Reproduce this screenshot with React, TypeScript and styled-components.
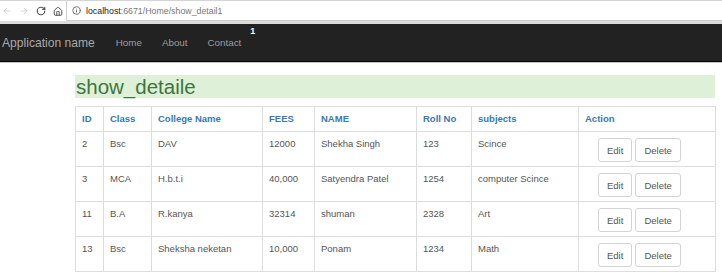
import React from "react";
import styled, { createGlobalStyle } from "styled-components";
import { ArrowLeft, ArrowRight, RotateCw, House, Info } from "lucide-react";

const GlobalStyle = createGlobalStyle`
  body {
    margin: 0;
    background: #fff;
    font-family: "Liberation Sans", Arial, sans-serif;
  }
`;

const Chrome = styled.div`
  height: 24px;
  box-sizing: border-box;
  display: flex;
  align-items: flex-start;
  background: #fff;
  border-top: 1px solid #d4d4d4;
  border-bottom: 3px solid #dcdcdc;
`;

const NavIcons = styled.div`
  display: flex;
  align-items: center;
  height: 20px;
  padding-left: 2px;
  gap: 7px;
  width: 64px;
`;

const IconSlot = styled.span<{ $dim?: boolean }>`
  display: flex;
  width: 10px;
  justify-content: center;
  color: ${(p) => (p.$dim ? "#cfcfcf" : "#555")};
`;

const AddressBox = styled.div`
  flex: 1;
  height: 20px;
  box-sizing: border-box;
  border: 1px solid #cfcfcf;
  border-right: none;
  border-top: none;
  display: flex;
  align-items: center;
  padding-left: 5px;
  gap: 5px;
  font-size: 8.8px;
  color: #777;
`;

const Host = styled.span`
  color: #222;
`;

const Navbar = styled.nav`
  height: 37px;
  background: #222;
  border-bottom: 1px solid #080808;
  box-shadow: 0 1px 0 #c4c4c4;
  display: flex;
  align-items: center;
  color: #9d9d9d;
`;

const Brand = styled.span`
  font-size: 12.1px;
  padding-left: 2px;
  margin-right: 11px;
  color: #a9a9a9;
`;

const NavLink = styled.span`
  font-size: 9.8px;
  padding: 0 10px;
  position: relative;
`;

const Badge = styled.span`
  position: absolute;
  right: -4px;
  top: -11px;
  font-size: 9px;
  font-weight: bold;
  color: #fff;
`;

const Main = styled.main`
  margin: 13px 0 0 75px;
  width: 640px;
`;

const Heading = styled.h2`
  margin: 0 0 8px;
  height: 23px;
  line-height: 23px;
  background: #dff0d8;
  color: #3c763d;
  font-weight: normal;
  font-size: 20.5px;
  padding-left: 1px;
`;

const Table = styled.table`
  width: 640px;
  table-layout: fixed;
  border-collapse: collapse;
  border: 1px solid #ddd;
  font-size: 9.5px;
`;

const Th = styled.th`
  text-align: left;
  color: #3a77b5;
  font-weight: bold;
  line-height: 13px;
  padding: 5px 6px 6px;
  border: 1px solid #ddd;
`;

const Td = styled.td`
  vertical-align: top;
  color: #555;
  line-height: 13px;
  padding: 5px 6px 4px;
  border: 1px solid #ddd;
`;

const Actions = styled.div`
  display: flex;
  gap: 3px;
  margin: 1px 0 0 13px;
`;

const Button = styled.button`
  height: 24px;
  padding: 0 8px;
  background: #fff;
  border: 1px solid #d3d3d3;
  border-radius: 3px;
  font-family: "Liberation Sans", Arial, sans-serif;
  font-size: 9.5px;
  color: #555;
`;

interface Student {
  id: number;
  cls: string;
  college: string;
  fees: string;
  name: string;
  roll: string;
  subject: string;
}

const students: Student[] = [
  { id: 2, cls: "Bsc", college: "DAV", fees: "12000", name: "Shekha Singh", roll: "123", subject: "Scince" },
  { id: 3, cls: "MCA", college: "H.b.t.i", fees: "40,000", name: "Satyendra Patel", roll: "1254", subject: "computer Scince" },
  { id: 11, cls: "B.A", college: "R.kanya", fees: "32314", name: "shuman", roll: "2328", subject: "Art" },
  { id: 13, cls: "Bsc", college: "Sheksha neketan", fees: "10,000", name: "Ponam", roll: "1234", subject: "Math" },
];

const widths = [28, 48, 111, 52, 102, 55, 107, 137];
const headers = ["ID", "Class", "College Name", "FEES", "NAME", "Roll No", "subjects", "Action"];

const App = () => {
  return (
    <>
      <GlobalStyle />
      <Chrome>
        <NavIcons>
          <IconSlot $dim><ArrowLeft size={10} strokeWidth={2} /></IconSlot>
          <IconSlot $dim><ArrowRight size={10} strokeWidth={2} /></IconSlot>
          <IconSlot><RotateCw size={10} strokeWidth={2.8} /></IconSlot>
          <IconSlot><House size={11} strokeWidth={2.4} /></IconSlot>
        </NavIcons>
        <AddressBox>
          <Info size={9} strokeWidth={2.2} color="#555" />
          <span>
            <Host>localhost</Host>:6671/Home/show_detail1
          </span>
        </AddressBox>
      </Chrome>
      <Navbar>
        <Brand>Application name</Brand>
        <NavLink>Home</NavLink>
        <NavLink>About</NavLink>
        <NavLink>
          Contact
          <Badge>1</Badge>
        </NavLink>
      </Navbar>
      <Main>
        <Heading>show_detaile</Heading>
        <Table>
          <colgroup>
            {widths.map((w, i) => (
              <col key={i} style={{ width: w }} />
            ))}
          </colgroup>
          <thead>
            <tr>
              {headers.map((h) => (
                <Th key={h}>{h}</Th>
              ))}
            </tr>
          </thead>
          <tbody>
            {students.map((s) => (
              <tr key={s.id}>
                <Td>{s.id}</Td>
                <Td>{s.cls}</Td>
                <Td>{s.college}</Td>
                <Td>{s.fees}</Td>
                <Td>{s.name}</Td>
                <Td>{s.roll}</Td>
                <Td>{s.subject}</Td>
                <Td>
                  <Actions>
                    <Button>Edit</Button>
                    <Button>Delete</Button>
                  </Actions>
                </Td>
              </tr>
            ))}
          </tbody>
        </Table>
      </Main>
    </>
  );
};

export default App;
